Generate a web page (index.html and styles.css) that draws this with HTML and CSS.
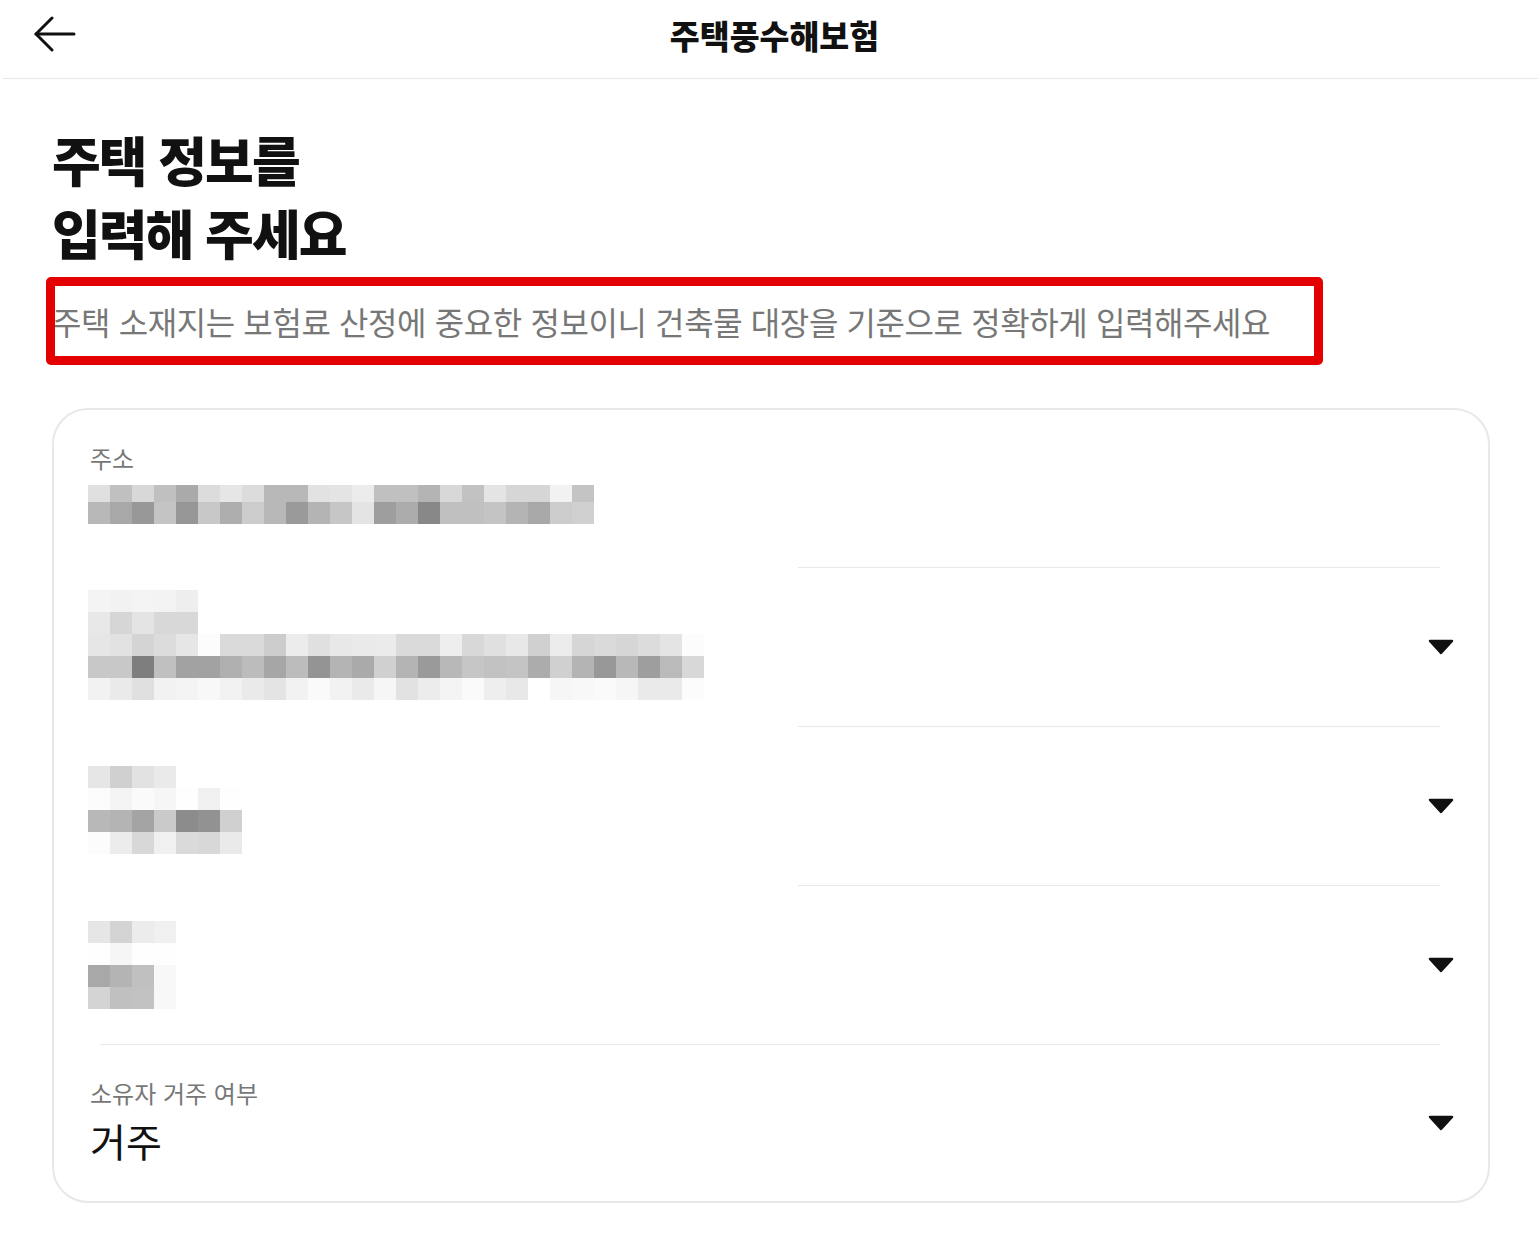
FILE: index.html
```html
<!DOCTYPE html>
<html lang="ko">
<head>
    <meta charset="UTF-8">
    <meta name="viewport" content="width=device-width, initial-scale=1.0">
    <title>주택풍수해보험</title>
    <link rel="stylesheet" href="styles.css">
</head>
<body>
    <header class="top-bar">
        <div class="back-button">
            <svg width="44" height="36" viewBox="0 0 44 36" fill="none" stroke="#111" stroke-width="3" stroke-linecap="round" stroke-linejoin="round">
                <path d="M41 18H3"/>
                <path d="M19 2L3 18L19 34"/>
            </svg>
        </div>
        <h1 class="top-title">주택풍수해보험</h1>
        <div></div>
    </header>

    <main class="page">
        <h2 class="page-heading">주택 정보를<br>입력해 주세요</h2>
        <p class="page-desc">
            주택 소재지는 보험료 산정에 중요한 정보이니 건축물 대장을 기준으로 정확하게 입력해주세요
            <span class="highlight-box"></span>
        </p>

        <section class="form-card">
            <div class="field field-first">
                <div class="field-body">
                    <div class="field-label">주소</div>
                    <div class="mosaic mosaic-addr" data-heights="17 22"
                         data-rows="e0 c0 d8 c0 aa dc e6 dc b8 b8 e2 e4 ec c0 c0 b4 d8 c2 e4 d6 d6 f2 c4|b8 a8 98 c4 96 c8 ae cc b8 9a b4 c6 e4 9e ac 88 c0 c0 c4 b4 a8 cc d0"></div>
                </div>
            </div>
            <div class="divider masked"></div>

            <div class="field">
                <div class="mosaic mosaic-up"
                     data-rows="f4 f2 f4 f3 ee|e8 d6 e4 d8 d8|e6 e2 d4 dc e6 fc da da cc ec e0 e8 ea eb da da ee d8 e0 e8 d0 ec d6 da d6 dc e4 fc|c8 c8 7e c0 a2 a2 b0 bc a6 bc 94 b4 aa d0 b4 9a b8 c6 c2 c4 ac d0 b4 98 b8 9e ba d8|f2 ea e0 f2 f4 f8 f2 ea e4 f2 fa f2 ea f6 e2 ec f4 fa ee e8 ff f6 f8 fa f6 ea ea fc"></div>
                <svg class="caret" width="26" height="16" viewBox="0 0 26 16"><path d="M2 2H24L13 14Z" fill="#111" stroke="#111" stroke-width="2.5" stroke-linejoin="round"/></svg>
            </div>
            <div class="divider masked"></div>

            <div class="field">
                <div class="mosaic mosaic-down"
                     data-rows="e6 d0 e2 ea|fc f4 fa f6 fe f0 fe|b8 b4 a4 ca 8c 92 d0|fc ec d8 f0 da d8 ea"></div>
                <svg class="caret" width="26" height="16" viewBox="0 0 26 16"><path d="M2 2H24L13 14Z" fill="#111" stroke="#111" stroke-width="2.5" stroke-linejoin="round"/></svg>
            </div>
            <div class="divider masked"></div>

            <div class="field">
                <div class="mosaic"
                     data-rows="e6 d4 ec f0|fe f6 fe fe|a8 b4 c0 f8|d4 c0 c2 f8"></div>
                <svg class="caret" width="26" height="16" viewBox="0 0 26 16"><path d="M2 2H24L13 14Z" fill="#111" stroke="#111" stroke-width="2.5" stroke-linejoin="round"/></svg>
            </div>
            <div class="divider"></div>

            <div class="field field-last">
                <div class="field-body">
                    <div class="field-label">소유자 거주 여부</div>
                    <div class="field-value">거주</div>
                </div>
                <svg class="caret" width="26" height="16" viewBox="0 0 26 16"><path d="M2 2H24L13 14Z" fill="#111" stroke="#111" stroke-width="2.5" stroke-linejoin="round"/></svg>
            </div>
        </section>
    </main>
    <script src="mosaic.js"></script>
</body>
</html>
```

FILE: styles.css
```css
body {
    margin: 0;
    background: #fff;
    color: #111;
    font-family: "Noto Sans CJK KR", "Noto Sans", sans-serif;
}

.top-bar {
    display: grid;
    grid-template-columns: 1fr auto 1fr;
    align-items: center;
    height: 78px;
    margin-left: 3px;
    border-bottom: 1px solid #e8e8e8;
}

.back-button {
    display: flex;
    align-items: center;
    padding-left: 30px;
    padding-bottom: 10px;
}

.top-title {
    margin: 0;
    padding-left: 8px;
    padding-bottom: 10px;
    font-size: 32.5px;
    font-weight: 900;
    color: #111;
}

.page {
    padding: 44px 48px 40px 52px;
}

.page-heading {
    margin: 0;
    font-size: 53px;
    line-height: 73px;
    font-weight: 900;
    letter-spacing: -2px;
    color: #111;
}

.page-desc {
    position: relative;
    margin: 30px 0 0;
    font-size: 32px;
    line-height: 44px;
    letter-spacing: -0.4px;
    color: #777;
}

/* 캡처 위에 표시된 강조 박스 */
.highlight-box {
    position: absolute;
    top: -22px;
    left: -6px;
    width: 1277px;
    height: 88px;
    box-sizing: border-box;
    border: 9px solid #e40000;
    border-radius: 5px;
}

.form-card {
    margin-top: 65px;
    border: 2px solid #e8e8e8;
    border-radius: 36px;
}

.field {
    display: flex;
    align-items: center;
    justify-content: space-between;
    height: 158px;
    padding: 0 34px;
}

.field-first {
    height: 157px;
    align-items: flex-start;
    box-sizing: border-box;
    padding-top: 32px;
}

.field-last {
    height: 156px;
}

.field-last .field-body {
    margin-bottom: 4px;
}

.field-label {
    margin-left: 2px;
    font-size: 24px;
    line-height: 32px;
    color: #777;
}

.field-value {
    margin-top: 6px;
    margin-left: 2px;
    font-size: 39px;
    line-height: 50px;
    color: #111;
}

.mosaic-addr {
    margin-top: 11px;
}

.mosaic-up {
    margin-bottom: 4px;
}

.mosaic-down {
    margin-top: 8px;
}

.mosaic-row {
    display: flex;
    height: 22px;
}

.mosaic-cell {
    width: 22px;
    height: 100%;
}

.caret {
    display: block;
    flex-shrink: 0;
}

.divider {
    height: 1px;
    margin: 0 48px 0 46px;
    background: #e8e8e8;
}

.divider.masked {
    background: linear-gradient(to right, transparent 698px, #e8e8e8 698px);
}
```

FILE: mosaic.js
```js
// 모자이크 처리된 입력값 그리기
document.querySelectorAll('.mosaic').forEach(function (box) {
    var heights = (box.dataset.heights || '').split(' ');
    box.dataset.rows.split('|').forEach(function (row, i) {
        var line = document.createElement('div');
        line.className = 'mosaic-row';
        if (heights[i]) line.style.height = heights[i] + 'px';
        row.trim().split(/\s+/).forEach(function (shade) {
            var cell = document.createElement('span');
            cell.className = 'mosaic-cell';
            cell.style.background = '#' + shade + shade + shade;
            line.appendChild(cell);
        });
        box.appendChild(line);
    });
});
```
